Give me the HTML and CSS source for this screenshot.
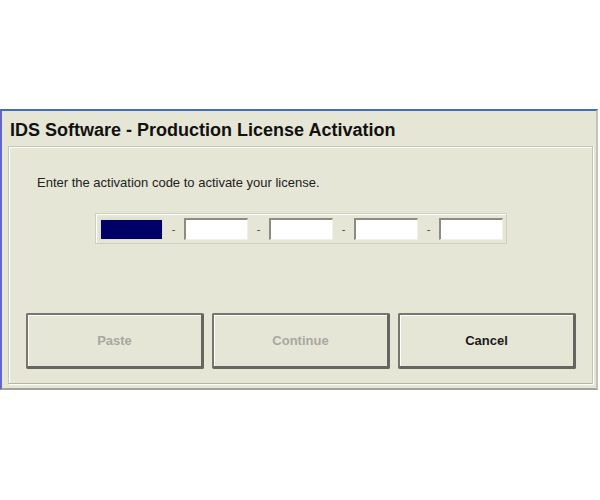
FILE: index.html
```html
<html>
<head>
  <link rel="stylesheet" href="styles.css">
</head>
<body>
  <div class="window">
    <div class="title">IDS Software - Production License Activation</div>
    <div class="panel">
      <div class="message">Enter the activation code to activate your license.</div>
      <div class="code">
        <div class="box active"></div>
        <span class="dash">-</span>
        <div class="box"></div>
        <span class="dash">-</span>
        <div class="box"></div>
        <span class="dash">-</span>
        <div class="box"></div>
        <span class="dash">-</span>
        <div class="box"></div>
      </div>
      <div class="buttons">
        <button class="button" disabled>Paste</button>
        <button class="button" disabled>Continue</button>
        <button class="button">Cancel</button>
      </div>
    </div>
  </div>
</body>
</html>
```

FILE: styles.css
```css
body {
  margin: 0;
  background: #ffffff;
  font-family: "Liberation Sans", Arial, sans-serif;
}
.window {
  box-sizing: border-box;
  margin-top: 109px;
  width: 598px;
  height: 281px;
  background: #e6e6d6;
  border-top: 2px solid #3f6fb8;
  border-left: 2px solid #6266c8;
  border-right: 2px solid #c4c4b4;
  border-bottom: 2px solid #a4a494;
}
.title {
  height: 35px;
  padding-left: 8px;
  line-height: 38px;
  font-size: 18px;
  font-weight: bold;
  color: #111111;
}
.panel {
  box-sizing: border-box;
  height: 238px;
  margin: 0 3px 0 6px;
  border-top: 1px solid #c6c6b6;
  border-left: 1px solid #c6c6b6;
  border-right: 1px solid #c6c6b6;
  border-bottom: 1px solid #b4b4a4;
  box-shadow: inset 1px 1px 0 #ffffff, 1px 1px 0 #ffffff;
}
.message {
  margin: 28px 0 0 28px;
  font-size: 13px;
  color: #222222;
}
.code {
  display: flex;
  align-items: center;
  width: 412px;
  height: 31px;
  margin: 23px 0 0 86px;
  padding: 0 3px;
  box-sizing: border-box;
  border: 1px solid #cfcfc0;
  box-shadow: inset 1px 1px 0 #ffffff;
}
.box {
  box-sizing: border-box;
  width: 64px;
  height: 22px;
  background: #ffffff;
  border-top: 2px solid #8c8c80;
  border-left: 2px solid #8c8c80;
  border-right: 1px solid #f0f0e8;
  border-bottom: 1px solid #f0f0e8;
}
.box.active {
  background: #000066;
  border-color: #e0e0d0;
}
.dash {
  width: 21px;
  text-align: center;
  font-size: 11px;
  color: #444444;
}
.buttons {
  display: flex;
  gap: 8px;
  margin: 69px 0 0 17px;
}
.button {
  box-sizing: border-box;
  width: 178px;
  height: 56px;
  background: #e6e6d6;
  border-top: 2px solid #777770;
  border-left: 2px solid #777770;
  border-right: 3px solid #666660;
  border-bottom: 3px solid #666660;
  border-radius: 2px;
  box-shadow: inset 1px 1px 0 #ffffff;
  font-family: "Liberation Sans", Arial, sans-serif;
  font-size: 13px;
  font-weight: bold;
  color: #1a1a1a;
}
.button:disabled {
  color: #a8a8a0;
}
```
